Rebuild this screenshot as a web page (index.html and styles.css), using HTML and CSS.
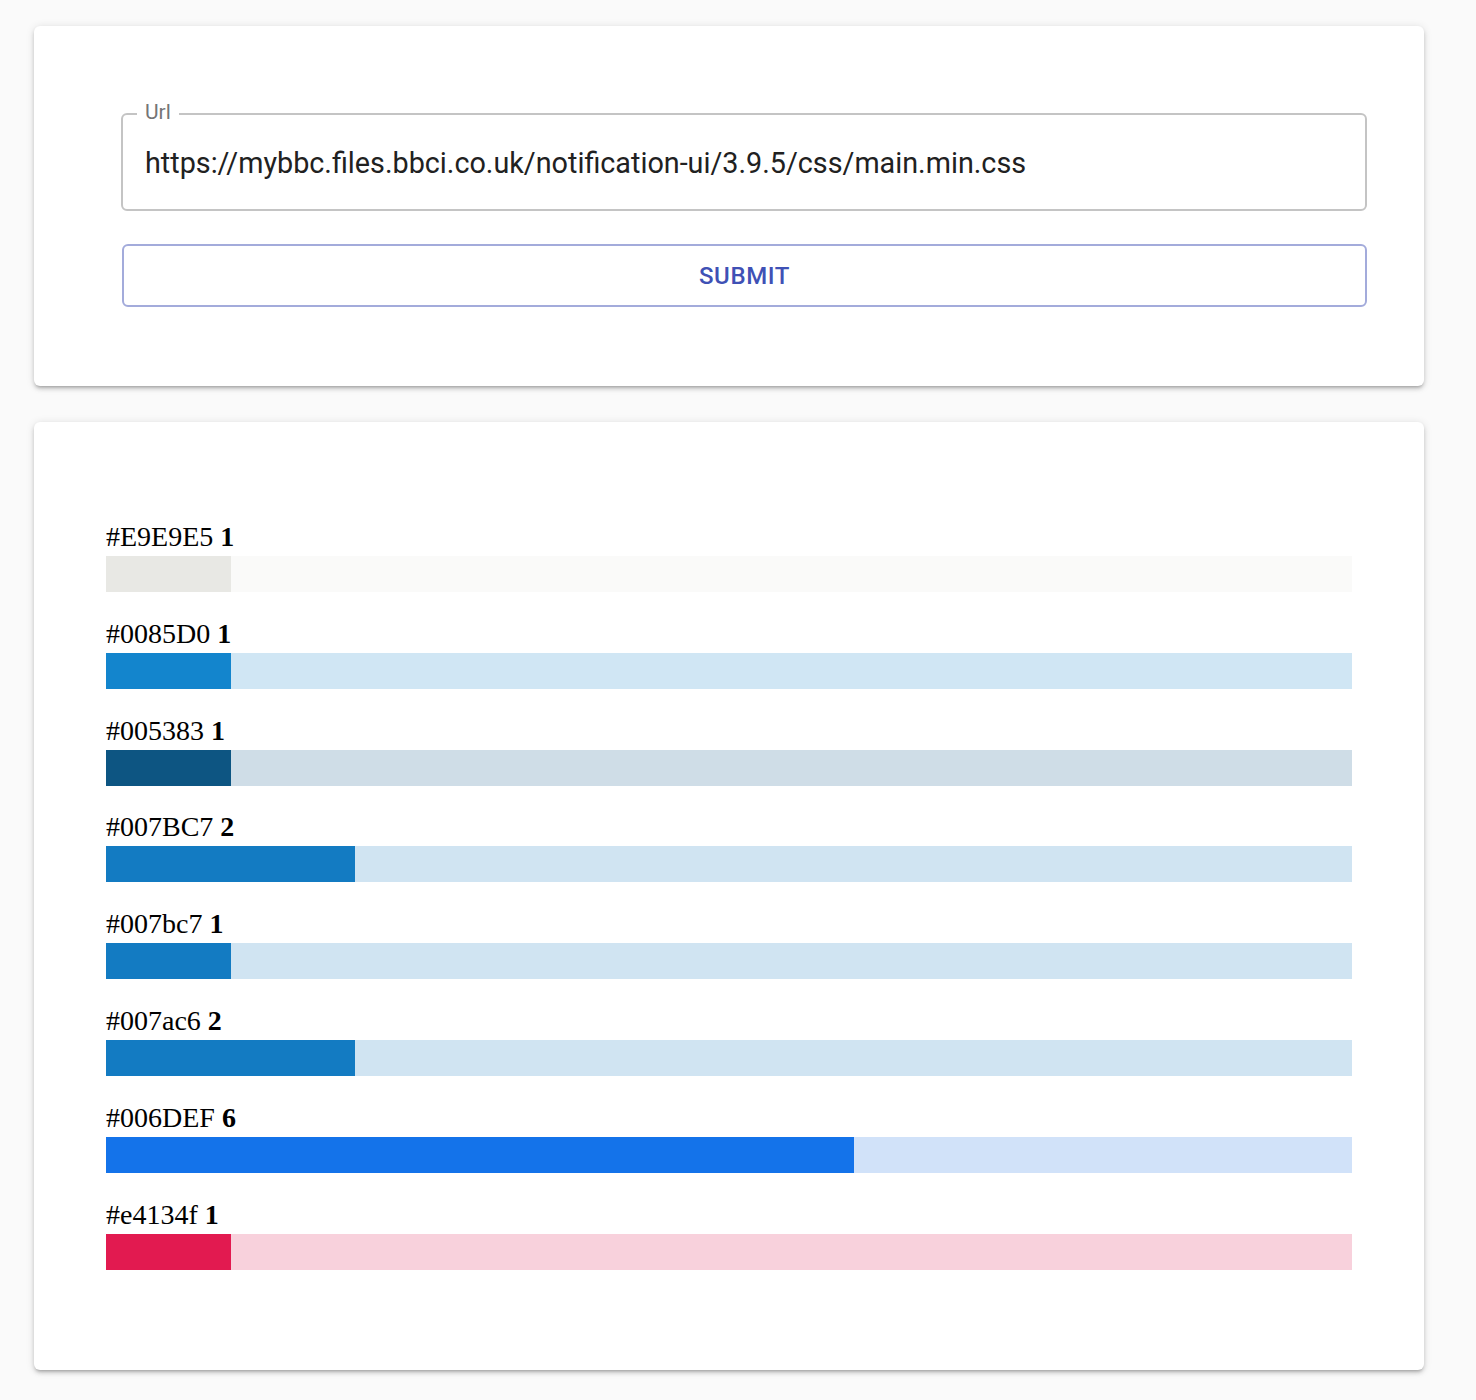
FILE: index.html
```html
<!DOCTYPE html>
<html>
<head>
<meta charset="utf-8">
<link rel="stylesheet" href="styles.css">
</head>
<body>
<div class="card card-form">
  <div class="field">
    <span class="field-label">Url</span>
    <span class="field-value">https://mybbc.files.bbci.co.uk/notification-ui/3.9.5/css/main.min.css</span>
  </div>
  <button class="submit">Submit</button>
</div>
<div class="card card-colors">
  <div class="row">
    <div class="row-label">#E9E9E5 <b>1</b></div>
    <div class="track t-e9"><div class="fill f-e9" style="width:10%"></div></div>
  </div>
  <div class="row">
    <div class="row-label">#0085D0 <b>1</b></div>
    <div class="track t-0085"><div class="fill f-0085" style="width:10%"></div></div>
  </div>
  <div class="row">
    <div class="row-label">#005383 <b>1</b></div>
    <div class="track t-0053"><div class="fill f-0053" style="width:10%"></div></div>
  </div>
  <div class="row">
    <div class="row-label">#007BC7 <b>2</b></div>
    <div class="track t-007b"><div class="fill f-007b" style="width:20%"></div></div>
  </div>
  <div class="row">
    <div class="row-label">#007bc7 <b>1</b></div>
    <div class="track t-007b"><div class="fill f-007b" style="width:10%"></div></div>
  </div>
  <div class="row">
    <div class="row-label">#007ac6 <b>2</b></div>
    <div class="track t-007b"><div class="fill f-007b" style="width:20%"></div></div>
  </div>
  <div class="row">
    <div class="row-label">#006DEF <b>6</b></div>
    <div class="track t-006d"><div class="fill f-006d" style="width:60%"></div></div>
  </div>
  <div class="row">
    <div class="row-label">#e4134f <b>1</b></div>
    <div class="track t-e413"><div class="fill f-e413" style="width:10%"></div></div>
  </div>
</div>
</body>
</html>
```
FILE: styles.css
```css
html, body {
  margin: 0;
  background: #fafafa;
}
body {
  padding: 26px 52px 30px 34px;
  font-family: Roboto, "Liberation Sans", sans-serif;
}
.card {
  background: #fff;
  border-radius: 6px;
  box-shadow: 0 3px 3px -2px rgba(0,0,0,0.2), 0 3px 4px 0 rgba(0,0,0,0.14), 0 1px 8px 0 rgba(0,0,0,0.12);
}
.card-form {
  padding: 87px 57px 79px 87px;
}
.field {
  position: relative;
  box-sizing: border-box;
  height: 98px;
  border: 2px solid #c4c4c4;
  border-radius: 6px;
  padding: 0 22px;
  display: flex;
  align-items: center;
}
.field-label {
  position: absolute;
  top: -14px;
  left: 14px;
  padding: 0 8px;
  background: #fff;
  font-size: 21px;
  line-height: 22px;
  color: #757575;
}
.field-value {
  font-size: 28.75px;
  line-height: 32px;
  color: #212121;
  margin-top: 2px;
}
.submit {
  display: block;
  box-sizing: border-box;
  width: calc(100% - 1px);
  margin: 33px 0 0 1px;
  height: 63px;
  background: #fff;
  border: 2px solid #a3abdb;
  border-radius: 6px;
  font-family: Roboto, "Liberation Sans", sans-serif;
  font-size: 24px;
  font-weight: 500;
  letter-spacing: 0.6px;
  text-transform: uppercase;
  color: #3f51b5;
  cursor: pointer;
}
.card-colors {
  margin-top: 36px;
  padding: 100px 72px 100px 72px;
  display: flex;
  flex-direction: column;
  gap: 26.8px;
}
.row-label {
  font-family: "Liberation Serif", serif;
  font-size: 28px;
  line-height: 30px;
  color: #000;
  margin-bottom: 4px;
}
.track {
  height: 36px;
  display: flex;
}
.fill {
  height: 100%;
}
.t-e9 { background: #fafaf9; }
.f-e9 { background: #e8e8e4; }
.t-0085 { background: #d0e6f4; }
.f-0085 { background: #1385cd; }
.t-0053 { background: #cfdde7; }
.f-0053 { background: #0d5582; }
.t-007b { background: #d0e4f2; }
.f-007b { background: #137bc2; }
.t-006d { background: #d1e2f9; }
.f-006d { background: #1473ea; }
.t-e413 { background: #f8d1dc; }
.f-e413 { background: #e21a50; }
```
